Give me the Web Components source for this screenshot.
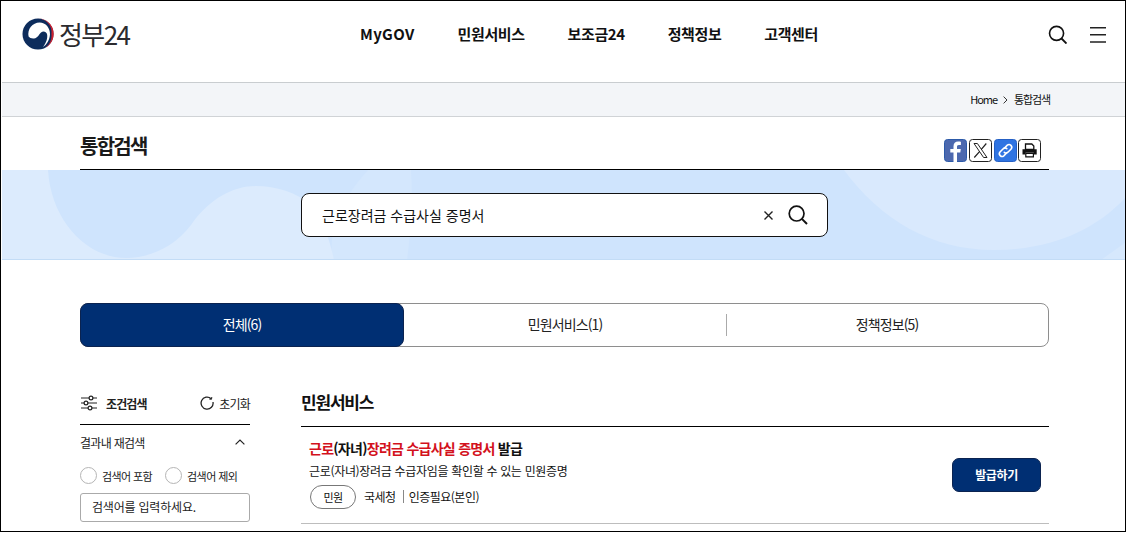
<!DOCTYPE html>
<html lang="ko">
<head>
<meta charset="utf-8">
<title>정부24 통합검색</title>
<style>
  html, body { margin: 0; padding: 0; background: #fff; }
  body {
    height: 533px;
    overflow: hidden;
    font-family: "Noto Sans CJK KR", "Noto Sans", sans-serif;
    color: #111;
  }
</style>
</head>
<body>
<gov-page>
  <gov-header></gov-header>
  <gov-breadcrumb current="통합검색"></gov-breadcrumb>
  <gov-title-bar>통합검색</gov-title-bar>
  <search-hero value="근로장려금 수급사실 증명서"></search-hero>
  <result-tabs></result-tabs>
  <result-columns>
    <filter-panel slot="side"></filter-panel>
    <service-list slot="main" heading="민원서비스">
      <service-item desc="근로(자녀)장려금 수급자임을 확인할 수 있는 민원증명" tag="민원" org="국세청" auth="인증필요(본인)" action="발급하기">
        <em>근로</em>(자녀)<em>장려금 수급사실 증명서</em> 발급
      </service-item>
    </service-list>
  </result-columns>
</gov-page>

<script>
const SEARCH_ICON = `<svg width="20" height="20" viewBox="0 0 20 20" fill="none" stroke="#111" stroke-width="1.7">
  <circle cx="8.600" cy="8.600" r="7.400"/><path d="M13.900 13.900 19 19" stroke-width="2"/></svg>`;

/**
 * @class GovPage
 * @description Outer frame of the screenshot window.
 */
class GovPage extends HTMLElement {
  constructor() {
    super();
    this.attachShadow({ mode: 'open' });
    this.shadowRoot.innerHTML = `
      <style>
        :host {
          display: block;
          box-sizing: border-box;
          width: 1126px;
          height: 532px;
          border: 1px solid #000;
          overflow: hidden;
          background: #fff;
        }
      </style>
      <slot></slot>
    `;
  }
}

/**
 * @class GovHeader
 * @description Top bar with the logo, main menu and the search and menu buttons.
 */
class GovHeader extends HTMLElement {
  constructor() {
    super();
    this.attachShadow({ mode: 'open' });
    const menu = ['MyGOV', '민원서비스', '보조금24', '정책정보', '고객센터'];
    this.shadowRoot.innerHTML = `
      <style>
        :host {
          display: flex;
          align-items: center;
          box-sizing: border-box;
          height: 82px;
          padding: 0 19px 16px 20px;
          margin-left: 1px;
          border-bottom: 1px solid #c9cdd0;
        }
        .logo {
          display: flex;
          align-items: center;
          gap: 5px;
          width: 338px;
          flex: none;
        }
        .logo svg { display: block; flex: none; }
        .logo span {
          font-size: 26px;
          line-height: 32px;
          letter-spacing: -1.600px;
          color: #2b2b2e;
        }
        nav { display: flex; gap: 43px; }
        nav a {
          font-size: 15px;
          font-weight: 700;
          letter-spacing: -0.4px;
          line-height: 22px;
          color: #111;
          white-space: nowrap;
        }
        nav a:first-child { letter-spacing: 0.35px; }
        .tools {
          display: flex;
          align-items: center;
          gap: 23px;
          margin-left: auto;
        }
        .tools svg { display: block; }
        .find { margin-top: 2px; }
        .burger { margin-top: 3px; }
      </style>
      <div class="logo">
        <svg width="32" height="32" viewBox="0 0 32 32">
          <circle cx="16" cy="16" r="15.500" fill="#0d2c5c"/>
          <path d="M14 .6A15.500 15.500 0 0 1 23.500 29.600 15 15 0 0 0 29.400 16 13.600 13.600 0 0 0 14 .6Z" fill="#cf1f2e"/>
          <path d="M6.600 18.600C5 11 10.600 4.400 17.600 4.400 23.600 4.400 28.400 10 28 16.400 27.600 22 24.600 26.600 21 29 24 25.400 26 20 25 16 24.200 13.400 21.200 12.600 19 14.400 17 16 16 20 12 20.400 9.600 20.600 7.600 20 6.600 18.600Z" fill="#fff"/>
        </svg>
        <span>정부24</span>
      </div>
      <nav>${menu.map(m => `<a>${m}</a>`).join('')}</nav>
      <div class="tools">
        <svg class="find" width="19" height="19" viewBox="0 0 20 20" fill="none" stroke="#111" stroke-width="1.700">
          <circle cx="9" cy="8.800" r="7.400"/><path d="M14.200 14.200 19.500 19.500" stroke-width="2"/>
        </svg>
        <svg class="burger" width="16" height="16" viewBox="0 0 16 16" stroke="#222" stroke-width="1.400">
          <path d="M0 .7H16M0 7.700H16M0 15H16"/>
        </svg>
      </div>
    `;
  }
}

/**
 * @class GovBreadcrumb
 * @description Grey location strip under the header.
 */
class GovBreadcrumb extends HTMLElement {
  constructor() {
    super();
    this.attachShadow({ mode: 'open' });
    this.shadowRoot.innerHTML = `
      <style>
        :host {
          display: flex;
          align-items: center;
          justify-content: flex-end;
          gap: 6px;
          box-sizing: border-box;
          height: 34px;
          padding: 0 75px 2px 0;
          margin-left: 1px;
          background: #f3f5f8;
          border-bottom: 1px solid #d0d3d6;
          font-size: 11px;
          letter-spacing: -1.100px;
          color: #111;
        }
        svg { display: block; margin-top: 2px; }
      </style>
      <span>Home</span>
      <svg width="5" height="8" viewBox="0 0 5 8" fill="none" stroke="#333"><path d="M.6.6 4 4 .6 7.400"/></svg>
      <span>${this.getAttribute('current')}</span>
    `;
  }
}

/**
 * @class GovTitleBar
 * @description Page title with the share and print buttons.
 */
class GovTitleBar extends HTMLElement {
  constructor() {
    super();
    this.attachShadow({ mode: 'open' });
    this.shadowRoot.innerHTML = `
      <style>
        :host {
          display: flex;
          justify-content: space-between;
          box-sizing: border-box;
          height: 53px;
          margin-left: 79px;
          width: 969px;
          border-bottom: 1px solid #000;
        }
        h1 {
          margin: 14px 0 0;
          font-size: 20px;
          line-height: 29px;
          font-weight: 700;
          letter-spacing: -1.750px;
          color: #1a1a1a;
        }
        .share {
          display: flex;
          gap: 2px;
          margin: 22px 8px 0 0;
          align-items: flex-start;
        }
        .share svg { display: block; }
        .share svg:last-child { margin-left: -1px; }
      </style>
      <h1><slot></slot></h1>
      <div class="share">
        <svg width="23" height="23" viewBox="0 0 23 23">
          <rect x=".5" y=".5" width="22" height="22" rx="3" fill="#4c68ae" stroke="#2c5aa8"/>
          <path d="M13 23V13.600h3.300l.5-3.700H13V7.800c0-1.100.4-1.800 1.900-1.800h2V2.800c-.4 0-1.500-.2-2.800-.2-2.800 0-4.600 1.700-4.600 4.800v2.500H6.300v3.700h3.200V23Z" fill="#fff"/>
        </svg>
        <svg width="23" height="23" viewBox="0 0 23 23" fill="none">
          <rect x=".5" y=".5" width="22" height="22" rx="3" fill="#fff" stroke="#222"/>
          <path d="M5 4.500h3.400L18 18.500h-3.400Z" stroke="#222" stroke-width="1"/>
          <path d="M17.300 4.500 12.300 10.300M10.500 12.600 5.300 18.500" stroke="#222" stroke-width="1.200"/>
        </svg>
        <svg width="23" height="23" viewBox="0 0 23 23" fill="none">
          <rect x=".5" y=".5" width="22" height="22" rx="3" fill="#2f74e2" stroke="#2560c4"/>
          <g stroke="#fff" stroke-width="1.600" stroke-linecap="round">
            <path d="M10.300 9.200 13.300 6.200a2.700 2.700 0 0 1 3.800 3.800l-3.200 3.200a2.700 2.700 0 0 1-3.600.1"/>
            <path d="M12.800 13.800 9.800 16.800a2.700 2.700 0 0 1-3.800-3.800l3.200-3.200a2.700 2.700 0 0 1 3.600-.1"/>
          </g>
        </svg>
        <svg width="23" height="23" viewBox="0 0 23 23">
          <rect x=".5" y=".5" width="22" height="22" rx="3" fill="#fff" stroke="#222"/>
          <path d="M7.500 5h6.300l2 2v3.300H7.500Z" fill="#fff" stroke="#111" stroke-width="1.300"/>
          <path d="M4.500 10.300h14.200v5.200h-2.900v-1.800H7.500v1.800H4.500Z" fill="#111"/>
          <path d="M7.800 14.500h7.600v3.300H7.800Z" fill="#fff" stroke="#111" stroke-width="1.200"/>
        </svg>
      </div>
    `;
  }
}

/**
 * @class SearchHero
 * @description Blue band with the wave background and the search field.
 */
class SearchHero extends HTMLElement {
  constructor() {
    super();
    this.attachShadow({ mode: 'open' });
    this.shadowRoot.innerHTML = `
      <style>
        :host {
          display: block;
          position: relative;
          box-sizing: border-box;
          height: 90px;
          margin-left: 1px;
          padding: 23px 0 0 299px;
          background: #cfe4fd;
          border-bottom: 1px solid #c3dcf6;
          overflow: hidden;
        }
        .waves { position: absolute; left: -1px; top: 0; }
        .box {
          position: relative;
          display: flex;
          align-items: center;
          box-sizing: border-box;
          width: 527px;
          height: 44px;
          padding: 0 19px 0 20px;
          background: #fff;
          border: 1px solid #111;
          border-radius: 8px;
        }
        .text {
          flex: 1;
          font-size: 14px;
          letter-spacing: 0;
          color: #111;
        }
        .clear { display: block; margin-right: 14px; }
        .go svg { display: block; }
      </style>
      <svg class="waves" width="1125" height="90" viewBox="0 0 1125 90">
        <path d="M367 0H410C412 30 410 60 406 90H332C326 60 340 30 367 0Z" fill="#d4e7fd"/>
        <path d="M0 0H47C50 50 85 88 125 88 150 88 174 76 190 55 208 29 232 16 255 16 275 16 295 22 312 36 322 52 329 70 333 90H0Z" fill="#dcebfd"/>
        <path d="M843 0C880 50 930 80 993 80 1050 80 1095 60 1125 27V0Z" fill="#d9e9fd"/>
        <path d="M1125 72 1100 90H1125Z" fill="#d6e8fd"/>
      </svg>
      <div class="box">
        <span class="text">${this.getAttribute('value')}</span>
        <svg class="clear" width="11" height="11" viewBox="0 0 11 11" stroke="#222" stroke-width="1.400"><path d="M1.500 1.500 9.500 9.500M9.500 1.500 1.500 9.500"/></svg>
        <span class="go">${SEARCH_ICON}</span>
      </div>
    `;
  }
}

/**
 * @class ResultTabs
 * @description Three-part tab bar with result counts.
 */
class ResultTabs extends HTMLElement {
  constructor() {
    super();
    this.attachShadow({ mode: 'open' });
    this.shadowRoot.innerHTML = `
      <style>
        :host {
          display: flex;
          box-sizing: border-box;
          width: 969px;
          height: 44px;
          margin: 43px 0 0 79px;
          border: 1px solid #8e8e8e;
          border-radius: 8px;
          font-size: 14px;
          letter-spacing: -0.9px;
          color: #222;
        }
        div {
          display: flex;
          align-items: center;
          justify-content: center;
          padding-bottom: 2px;
        }
        .on {
          width: 324px;
          margin: -1px 0 -1px -1px;
          background: #002f73;
          border: 1px solid #0b2350;
          border-radius: 8px;
          box-sizing: border-box;
          color: #fff;
        }
        .mid { width: 322px; }
        .last { flex: 1; position: relative; }
        .last::before {
          content: "";
          position: absolute;
          left: 0;
          top: 10px;
          bottom: 10px;
          width: 1px;
          background: #aaa;
        }
      </style>
      <div class="on">전체(6)</div>
      <div class="mid">민원서비스(1)</div>
      <div class="last">정책정보(5)</div>
    `;
  }
}

/**
 * @class ResultColumns
 * @description Two-column layout for the filter panel and the result list.
 */
class ResultColumns extends HTMLElement {
  constructor() {
    super();
    this.attachShadow({ mode: 'open' });
    this.shadowRoot.innerHTML = `
      <style>
        :host {
          display: grid;
          grid-template-columns: 170px 748px;
          column-gap: 51px;
          margin: 38px 0 0 79px;
          width: 969px;
        }
      </style>
      <slot name="side"></slot>
      <slot name="main"></slot>
    `;
  }
}

/**
 * @class FilterPanel
 * @description Left-hand condition search with the include/exclude options.
 */
class FilterPanel extends HTMLElement {
  constructor() {
    super();
    this.attachShadow({ mode: 'open' });
    this.shadowRoot.innerHTML = `
      <style>
        :host {
          display: block;
          font-size: 12px;
          letter-spacing: -0.5px;
          color: #222;
        }
        .head {
          display: flex;
          align-items: center;
          box-sizing: border-box;
          height: 40px;
          padding-bottom: 3px;
          border-bottom: 1px solid #000;
        }
        .head strong {
          margin-left: 8px;
          font-size: 12px;
          font-weight: 700;
          letter-spacing: -0.9px;
        }
        .reset {
          display: flex;
          align-items: center;
          gap: 5px;
          margin-left: auto;
          letter-spacing: -0.8px;
        }
        svg { display: block; }
        .again {
          display: flex;
          align-items: center;
          justify-content: space-between;
          box-sizing: border-box;
          height: 36px;
          padding: 0 5px 2px 0;
          letter-spacing: -0.7px;
        }
        .options {
          display: flex;
          align-items: center;
          gap: 5px;
          margin-top: 6px;
          font-size: 11px;
          letter-spacing: -0.6px;
        }
        .options i {
          display: block;
          box-sizing: border-box;
          width: 17px;
          height: 17px;
          border: 1px solid #b5b5b5;
          border-radius: 50%;
        }
        .options span { margin-right: 8px; }
        .input {
          box-sizing: border-box;
          height: 29px;
          margin-top: 9px;
          padding-left: 11px;
          line-height: 25px;
          border: 1px solid #aaa;
          border-radius: 3px;
          font-size: 12px;
          letter-spacing: -0.2px;
        }
      </style>
      <div class="head">
        <svg width="18" height="16" viewBox="0 0 18 16" fill="#fff" stroke="#222" stroke-width="1.200">
          <path d="M1 3H17M1 8H17M1 13H17"/>
          <circle cx="11" cy="3" r="1.900"/><circle cx="6" cy="8" r="1.900"/><circle cx="10" cy="13" r="1.900"/>
        </svg>
        <strong>조건검색</strong>
        <span class="reset">
          <svg width="14" height="14" viewBox="0 0 14 14" fill="none" stroke="#222" stroke-width="1.300">
            <path d="M11.200 2.700A6 6 0 1 0 13 6"/><path d="M11.800 1 11.500 3.300 9.200 3" stroke-width="1"/>
          </svg>
          초기화
        </span>
      </div>
      <div class="again">
        <span>결과내 재검색</span>
        <svg width="10" height="6" viewBox="0 0 10 6" fill="none" stroke="#222" stroke-width="1.200"><path d="M.6 5.400 5 1 9.400 5.400"/></svg>
      </div>
      <div class="options">
        <i></i><span>검색어 포함</span>
        <i></i><span>검색어 제외</span>
      </div>
      <div class="input">검색어를 입력하세요.</div>
    `;
  }
}

/**
 * @class ServiceList
 * @description Titled group of results.
 */
class ServiceList extends HTMLElement {
  constructor() {
    super();
    this.attachShadow({ mode: 'open' });
    this.shadowRoot.innerHTML = `
      <style>
        :host { display: block; }
        h2 {
          box-sizing: border-box;
          height: 42px;
          margin: 0;
          padding-top: 5px;
          border-bottom: 1px solid #000;
          font-size: 17px;
          line-height: 24px;
          font-weight: 700;
          letter-spacing: -1.200px;
          color: #111;
        }
      </style>
      <h2>${this.getAttribute('heading')}</h2>
      <slot></slot>
    `;
  }
}

/**
 * @class ServiceItem
 * @description One result row: the slotted title, description, tags and action.
 */
class ServiceItem extends HTMLElement {
  constructor() {
    super();
    this.attachShadow({ mode: 'open' });
    this.shadowRoot.innerHTML = `
      <style>
        :host {
          display: flex;
          align-items: center;
          justify-content: space-between;
          box-sizing: border-box;
          height: 97px;
          padding: 0 8px 4px 9px;
          border-bottom: 1px solid #bdbdbd;
          color: #111;
        }
        ::slotted(em) { font-style: normal; color: #d3111c; }
        .title {
          margin-left: -1px;
          font-size: 14px;
          line-height: 20px;
          font-weight: 700;
          letter-spacing: -0.73px;
        }
        .desc {
          margin: 4px 0 0 -1px;
          font-size: 12px;
          line-height: 18px;
          letter-spacing: -0.32px;
        }
        .meta {
          display: flex;
          align-items: center;
          margin-top: 5px;
          font-size: 12px;
          letter-spacing: -0.5px;
        }
        .tag {
          display: flex;
          align-items: center;
          justify-content: center;
          box-sizing: border-box;
          width: 46px;
          height: 24px;
          margin-right: 8px;
          border: 1px solid #777;
          border-radius: 12px;
          font-size: 11px;
        }
        .auth {
          margin-left: 7px;
          padding-left: 5px;
          border-left: 1px solid #888;
          line-height: 13px;
        }
        button {
          box-sizing: border-box;
          width: 89px;
          height: 34px;
          margin-top: 3px;
          background: #002f73;
          border: 1px solid #0b2350;
          border-radius: 7px;
          color: #fff;
          font: 700 12px "Noto Sans CJK KR", "Noto Sans", sans-serif;
          letter-spacing: -0.4px;
        }
      </style>
      <div>
        <div class="title"><slot></slot></div>
        <div class="desc">${this.getAttribute('desc')}</div>
        <div class="meta">
          <span class="tag">${this.getAttribute('tag')}</span>
          <span>${this.getAttribute('org')}</span>
          <span class="auth">${this.getAttribute('auth')}</span>
        </div>
      </div>
      <button type="button">${this.getAttribute('action')}</button>
    `;
  }
}

customElements.define('gov-page', GovPage);
customElements.define('gov-header', GovHeader);
customElements.define('gov-breadcrumb', GovBreadcrumb);
customElements.define('gov-title-bar', GovTitleBar);
customElements.define('search-hero', SearchHero);
customElements.define('result-tabs', ResultTabs);
customElements.define('result-columns', ResultColumns);
customElements.define('filter-panel', FilterPanel);
customElements.define('service-list', ServiceList);
customElements.define('service-item', ServiceItem);
</script>
</body>
</html>
